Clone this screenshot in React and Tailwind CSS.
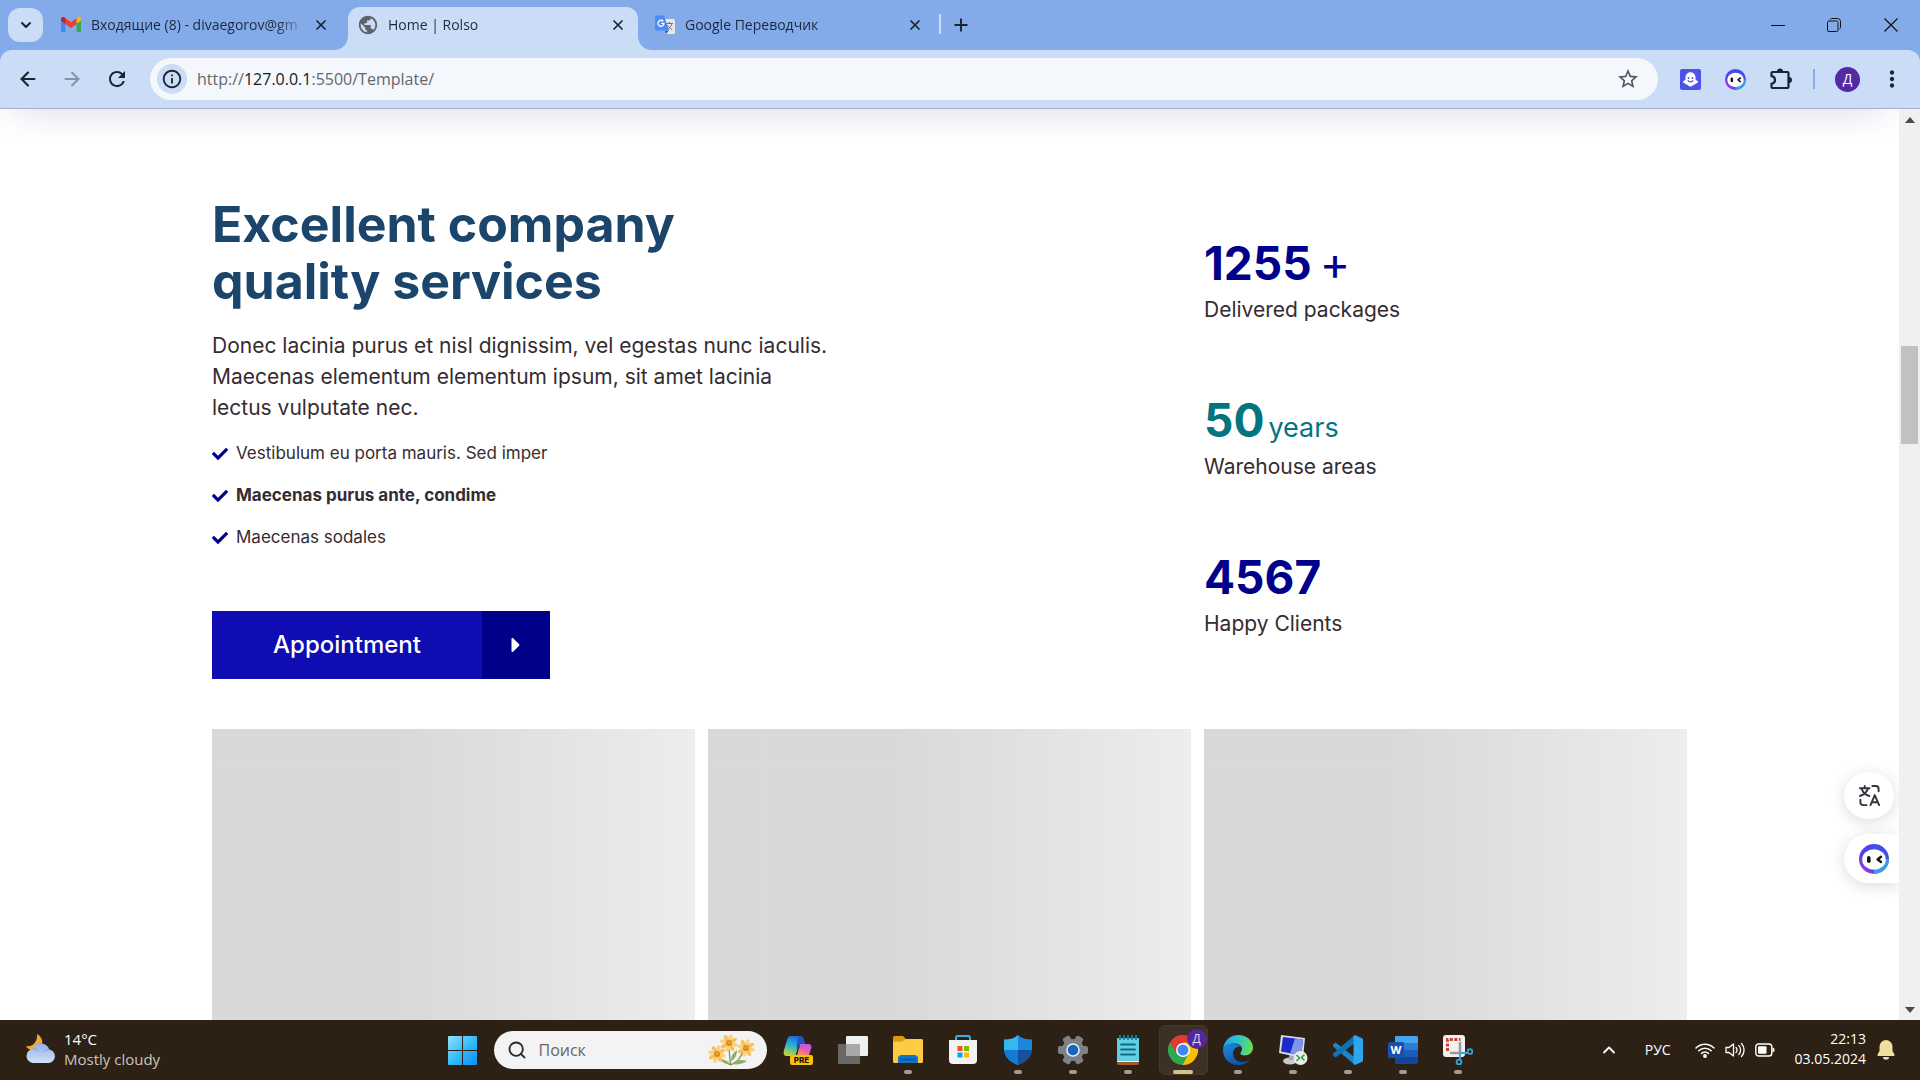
import React from "react";
import { ChevronDown, ChevronUp, X, Plus, ArrowLeft, ArrowRight, Search } from "lucide-react";
import { FaCaretRight, FaCheck } from "react-icons/fa";
import { MdRefresh, MdStarOutline, MdInfoOutline, MdMoreVert, MdPublic } from "react-icons/md";

/* ---------- small drawings ---------- */

const Gmail = () => (
  <svg viewBox="0 0 20 15" className="h-[15px] w-5">
    <path d="M0 2v11.600a1.400 1.400 0 0 0 1.400 1.400H4.500V6z" fill="#4285f4" />
    <path d="M15.500 6v9h3.100a1.400 1.400 0 0 0 1.400-1.400V2z" fill="#34a853" />
    <path d="M15.500 1v6L20 3.600V2c0-2-2-2.500-3.300-1.700z" fill="#fbbc04" />
    <path d="M4.500 7V1L10 5.200 15.500 1v6L10 11.200z" fill="#ea4335" />
    <path d="M0 2v1.600L4.500 7V1L3.300.3C2-.5 0 0 0 2z" fill="#c5221f" />
  </svg>
);

const Translate = () => (
  <svg viewBox="0 0 20 20" className="size-5">
    <path d="M8 4h10.500A1.500 1.500 0 0 1 20 5.500v12a1.500 1.500 0 0 1-1.500 1.500H11z" fill="#e8e8e6" />
    <path d="M11 8.500h7M14.500 7v1.500M17 8.500c-.7 3-2.500 4.700-5 6M12.500 10c.8 2 2.500 3.700 4.700 4.500" stroke="#6b7280" strokeWidth="1" fill="none" />
    <path d="M10 15.500h4L11 19z" fill="#3750b5" />
    <path d="M1.500.5H9l5 15H1.500A1.500 1.500 0 0 1 0 14V2A1.500 1.500 0 0 1 1.500.5z" fill="#4c8bf5" />
    <path d="M8.300 6.300A3 3 0 1 0 9 8.400H6.200" fill="none" stroke="#fff" strokeWidth="1.300" />
  </svg>
);

const Ghost = () => (
  <svg viewBox="0 0 21 21" className="size-[21px]">
    <rect width="21" height="21" rx="2" fill="#4f52e8" />
    <path d="M10.500 3.200a5 5 0 0 1 5 5v2.300c0 .8 2.500 1 2.500 2.500 0 1.300-2 1-2.600 2-.5 1-1.800.5-2.500 1.200-.8 1-1.500 1.300-2.400 1.300s-1.600-.3-2.400-1.300c-.7-.7-2-.2-2.500-1.200-.6-1-2.600-.7-2.600-2 0-1.500 2.500-1.700 2.500-2.500V8.200a5 5 0 0 1 5-5z" fill="#fff" />
    <circle cx="8.500" cy="9" r=".9" fill="#4f52e8" />
    <circle cx="12.500" cy="9" r=".9" fill="#4f52e8" />
    <path d="M7.800 11.300c1.200 2 4.200 2 5.400 0" stroke="#4f52e8" strokeWidth="1.300" fill="none" />
  </svg>
);

const Puzzle = () => (
  <svg viewBox="0 0 22 22" className="size-[22px]">
    <path d="M2.500 4h15a1 1 0 0 1 1 1v14a1 1 0 0 1-1 1h-15a1 1 0 0 1-1-1v-3.200c2.200-.3 3.500-1.800 3.500-3.800s-1.300-3.500-3.500-3.800V5a1 1 0 0 1 1-1z" fill="none" stroke="#1b2430" strokeWidth="2.200" strokeLinejoin="round" />
    <path d="M7 3.500a3 3 0 0 1 6 0zM19 9a3 3 0 0 1 0 6z" fill="#1b2430" />
  </svg>
);

const Bot = ({ id, className }) => (
  <svg viewBox="0 0 30 30" className={className}>
    <defs>
      <linearGradient id={id} x1="0" y1="1" x2=".8" y2=".2">
        <stop offset="0" stopColor="#c03ae0" />
        <stop offset=".45" stopColor="#5a3be6" />
        <stop offset="1" stopColor="#3f4fe8" />
      </linearGradient>
    </defs>
    <circle cx="15" cy="15" r="15" fill={`url(#${id})`} />
    <path d="M15 30a15 15 0 0 0 15-15l-4 0-11 11z" fill="#35b4e4" opacity=".8" />
    <ellipse cx="15" cy="15.500" rx="11.800" ry="10.300" fill="#fff" />
    <rect x="8" y="12" width="3.600" height="7" rx="1.800" fill="#15151c" />
    <path d="M22 12.800l-3.400 2.700 3.400 2.500" stroke="#15151c" strokeWidth="2.400" fill="none" strokeLinecap="round" strokeLinejoin="round" />
  </svg>
);

const TranslateSwap = () => (
  <svg viewBox="0 0 24 24" className="size-[23px]" fill="none" stroke="#34343f" strokeWidth="2" strokeLinecap="round" strokeLinejoin="round">
    <path d="M2 4.500h10M7 2v2.500M10.500 4.500C9.500 8.500 6.500 11 2 12.500M3.800 5c1.200 3.800 4.200 6.500 8 7.500" />
    <path d="M15 2h3.500a3 3 0 0 1 3 3v2.500M2.500 16.500V19a3 3 0 0 0 3 3H9" />
    <path d="M13 22l4.500-10.500L22 22M14.500 19h6" />
  </svg>
);

const Weather = () => (
  <svg viewBox="0 0 31 30" className="h-[30px] w-[31px]">
    <defs>
      <linearGradient id="cloud" x1="0" y1="0" x2="0" y2="1">
        <stop offset="0" stopColor="#8fb0ea" />
        <stop offset="1" stopColor="#d3e0f8" />
      </linearGradient>
    </defs>
    <path d="M12 0c6 3 7 11 2.500 14.500C10 18 2.500 16 1 12c5 1.500 12-3 11-12z" fill="#f3a72e" />
    <path d="M8 29a7.200 7.200 0 0 1-.3-14.300A9 9 0 0 1 24.300 15.500 6.800 6.800 0 0 1 23.500 29z" fill="url(#cloud)" />
    <path d="M7.700 15c3-.5 5 .8 6 2.500M24.300 15.500c-2.300-.2-4 .8-5 2.200" stroke="#7f9fe0" fill="none" />
  </svg>
);

const Start = () => (
  <svg viewBox="0 0 29 29" className="size-[29px]">
    <defs>
      <linearGradient id="start" x1="0" y1="0" x2="1" y2="1">
        <stop offset="0" stopColor="#8fe3ff" />
        <stop offset=".5" stopColor="#35bdf8" />
        <stop offset="1" stopColor="#0a8cf5" />
      </linearGradient>
    </defs>
    <path d="M1 0h13v14H0V1a1 1 0 0 1 1-1zM15 0h13a1 1 0 0 1 1 1v13H15zM0 15h14v14H1a1 1 0 0 1-1-1zM15 15h14v13a1 1 0 0 1-1 1H15z" fill="url(#start)" />
  </svg>
);

const petals = [0, 45, 90, 135, 180, 225, 270, 315];
const Bloom = ({ x, y, s }) => (
  <g transform={`translate(${x} ${y}) scale(${s})`}>
    {petals.map((a) => (
      <ellipse key={a} cx="0" cy="-6" rx="2.200" ry="4" fill={a % 90 ? "#f7c25a" : "#fbd27c"} transform={`rotate(${a + 15})`} />
    ))}
    <circle r="3.300" fill="#d9861c" />
    <circle r="1.800" cy="-.5" fill="#efa02e" />
  </g>
);
const Flowers = () => (
  <svg viewBox="0 0 50 32" className="h-8 w-[50px] shrink-0">
    <path d="M24 31C22 24 23 20 22 15M24 31c5-3 10-6 12-14M24 31c-5-2-9-4-13-9" stroke="#7d9a54" strokeWidth="1.300" fill="none" />
    <path d="M24 27c0-6 3-9 6-11 0 5-2 9-6 11zM25 30c3-4 9-5 15-3-4 3-10 4-15 3zM23 30c-2-3-6-5-10-5 2 4 6 5 10 5z" fill="#8fae6a" />
    <Bloom x={22} y={9} s={0.9} />
    <Bloom x={10} y={20} s={0.9} />
    <Bloom x={39} y={14} s={0.9} />
  </svg>
);

const Copilot = () => (
  <svg viewBox="0 0 30 30" className="size-[30px]">
    <defs>
      <linearGradient id="cpa" x1=".6" y1="0" x2=".3" y2="1">
        <stop offset="0" stopColor="#1d63dc" />
        <stop offset=".45" stopColor="#22b0d8" />
        <stop offset="1" stopColor="#c6d431" />
      </linearGradient>
      <linearGradient id="cpb" x1=".8" y1="0" x2=".3" y2="1">
        <stop offset="0" stopColor="#a95df0" />
        <stop offset=".5" stopColor="#e55ab4" />
        <stop offset="1" stopColor="#f79052" />
      </linearGradient>
    </defs>
    <path d="M8 1h9c2 0 3 1 3.500 3L22 9h-4c-2 0-2.500 1-3 3l-2 7c-.6 2-1 2-3 2H4c-3 0-4-2-3-6L4 5c1-3 2-4 4-4z" fill="url(#cpa)" />
    <path d="M17 1c2 0 3 1 3.500 3L22 9h-4c-2 0-2.500 1-3 3l-1 3c-1-4 0-11 3-14z" fill="#1b55c8" />
    <path d="M18 9h7c3 0 4 2 3 5l-2 6H14l2.500-8.500C17 9.500 17 9 18 9z" fill="url(#cpb)" />
    <rect x="7" y="20" width="23" height="10" rx="2" fill="#fbbf10" />
    <text x="18.500" y="28" textAnchor="middle" fontFamily="Inter, sans-serif" fontSize="8" fontWeight="800" fill="#1c1407">PRE</text>
  </svg>
);

const TaskView = () => (
  <svg viewBox="0 0 30 30" className="size-[30px]">
    <rect x="8" y="1" width="22" height="20" rx="1" fill="#efefef" />
    <rect x="0" y="9" width="22" height="20" rx="1" fill="#6a6866" />
    <path d="M8 9h14v12H8z" fill="#a9a8a7" />
  </svg>
);

const Folder = () => (
  <svg viewBox="0 0 30 30" className="size-[30px]">
    <path d="M1.500 1H10l3 3h7v8H0V2.500A1.500 1.500 0 0 1 1.500 1z" fill="#d99a0e" />
    <path d="M0 6.500h9l4-2.500h15.500A1.500 1.500 0 0 1 30 5.500v21a1.500 1.500 0 0 1-1.500 1.500h-27A1.500 1.500 0 0 1 0 26.500z" fill="#fdcc42" />
    <path d="M5 28v-4.500A3.500 3.500 0 0 1 8.500 20h13a3.500 3.500 0 0 1 3.500 3.500V28z" fill="#1274c9" />
    <path d="M8 24.500h14" stroke="#0c4f96" strokeWidth="1.500" />
  </svg>
);

const Store = () => (
  <svg viewBox="0 0 30 30" className="size-[30px]">
    <path d="M8 6V3a2 2 0 0 1 2-2h10a2 2 0 0 1 2 2v3" stroke="#35b3e8" strokeWidth="2" fill="none" />
    <path d="M1 5h28v20a4 4 0 0 1-4 4H5a4 4 0 0 1-4-4z" fill="#f3f3f3" />
    <path d="M9.500 11h5v5h-5z" fill="#f25022" /><path d="M16 11h5v5h-5z" fill="#7fba00" />
    <path d="M9.500 17.500h5v5h-5z" fill="#00a4ef" /><path d="M16 17.500h5v5h-5z" fill="#ffb900" />
  </svg>
);

const Shield = () => (
  <svg viewBox="0 0 30 30" className="size-[30px]">
    <path d="M15 0c3 3 8 4.500 14 4.500V13c0 9-6 14-14 17z" fill="#1a86dc" />
    <path d="M15 0C12 3 7 4.500 1 4.500V13c0 9 6 14 14 17z" fill="#35b8ee" />
    <path d="M15 15h13.800C28 22.500 22.500 27 15 30z" fill="#15509f" />
    <path d="M15 15H1.200C2 22.500 7.500 27 15 30z" fill="#147bd3" />
  </svg>
);

const Gear = () => (
  <svg viewBox="0 0 30 30" className="size-[30px]">
    <g fill="#7b8187">
      {[0, 60, 120].map((a) => (
        <rect key={a} x="11" y="0" width="8" height="30" rx="2" transform={`rotate(${a + 30} 15 15)`} />
      ))}
      <circle cx="15" cy="15" r="11" />
    </g>
    <circle cx="15" cy="15" r="6.800" fill="#e8f1fa" />
    <circle cx="15" cy="15" r="5.300" fill="#1667b7" />
  </svg>
);

const Notepad = () => (
  <svg viewBox="0 0 30 30" className="size-[30px]">
    <path d="M4 25h22v3a2 2 0 0 1-2 2H6a2 2 0 0 1-2-2z" fill="#a4592b" />
    <path d="M4 3h22v24H4z" fill="#f1f1ee" />
    <path d="M4 3h22v23H4z" fill="#62cfe3" />
    <path d="M7 1v3M11 1v3M15 1v3M19 1v3M23 1v3" stroke="#137d97" strokeWidth="2.200" strokeLinecap="round" />
    <path d="M8 9.500h14M8 14.500h14M8 19.500h14" stroke="#116a83" strokeWidth="1.800" strokeLinecap="round" />
  </svg>
);

const Chrome = () => (
  <svg viewBox="0 0 30 30" className="size-[30px]">
    <path d="M15 15 2 7.500A15 15 0 0 1 28 7.500z" fill="#e33b2e" />
    <path d="M15 15 2 7.500A15 15 0 0 0 15 30l6.500-11z" fill="#2da94f" />
    <path d="M15 15l6 3.500L14.500 30A15 15 0 0 0 28 7.500H15z" fill="#fdbd00" />
    <path d="M2 7.500h13v7.500l-6.500 3.500z" fill="#e33b2e" />
    <circle cx="15" cy="15" r="7" fill="#fff" />
    <circle cx="15" cy="15" r="5.500" fill="#4285f4" />
  </svg>
);

const Edge = () => (
  <svg viewBox="0 0 30 30" className="size-[30px]">
    <defs>
      <linearGradient id="edga" x1="0" y1=".3" x2="1" y2=".4">
        <stop offset="0" stopColor="#1fa3e6" />
        <stop offset=".5" stopColor="#2fc3d2" />
        <stop offset="1" stopColor="#67e04a" />
      </linearGradient>
      <linearGradient id="edgb" x1="0" y1="0" x2=".7" y2="1">
        <stop offset="0" stopColor="#1b8ee0" />
        <stop offset="1" stopColor="#0c4d9f" />
      </linearGradient>
    </defs>
    <path d="M0 14C1 6 7 0 15 0c9 0 15 6 15 12.500 0 5-4 8-8.500 8-3 0-4.500-1-4-2.500.5-1.500 1.500-2 1.500-4C19 11 16 8.500 12 8.500 6 8.500 1 11 0 14z" fill="url(#edga)" />
    <path d="M0 14c1.500-4.500 6-6 10.500-5.500 3 .3 5.500 1.300 7 3-4-.5-7.500 3-7.500 7 0 5 4.500 8.500 9 8.500 3 0 6-1.300 8-2.500C24 28.500 20 30 15 30 6 30 0 23 0 15z" fill="url(#edgb)" />
  </svg>
);

const Remote = () => (
  <svg viewBox="0 0 30 30" className="size-[30px]">
    <ellipse cx="12" cy="26" rx="7" ry="3.500" fill="#c9cbd0" />
    <path d="M11 19h5v6h-5z" fill="#a6a9b0" />
    <path d="M3 0l24 3-2 20L1 18z" fill="#d9dbe2" />
    <path d="M5 2l20 2.500-1.800 16L3 16.500z" fill="#1a2cc8" />
    <path d="M17 3.500l8 1-1.800 16-11-2.200z" fill="#7f95ea" />
    <circle cx="22.500" cy="23" r="7" fill="#e9ece9" />
    <path d="M18.500 20l3 3-3 3M26.500 19.500l-3 3 3 3" stroke="#3c9a3c" strokeWidth="1.600" fill="none" />
  </svg>
);

const VSCode = () => (
  <svg viewBox="0 0 30 30" className="size-[30px]">
    <path d="M0 9.500l2.500-2L22 22.500V30L0 11.500z" fill="#1a84cc" />
    <path d="M0 20.500l2.500 2L22 8V0L0 18.500z" fill="#1272b6" />
    <path d="M22 0l7 3.200a1.500 1.500 0 0 1 1 1.300v21a1.500 1.500 0 0 1-1 1.300L22 30l-1.500-1V1z" fill="#2ea6ee" />
  </svg>
);

const Word = () => (
  <svg viewBox="0 0 30 30" className="size-[30px]">
    <path d="M8 1h20.500A1.500 1.500 0 0 1 30 2.500V8H7V2a1 1 0 0 1 1-1z" fill="#45a5ee" />
    <path d="M7 8h23v7H7z" fill="#2c7cd6" /><path d="M7 15h23v7H7z" fill="#1b5cbd" />
    <path d="M7 22h23v5.500a1.500 1.500 0 0 1-1.500 1.500H8a1 1 0 0 1-1-1z" fill="#134599" />
    <rect x="0" y="7" width="16" height="16" rx="1.500" fill="#1850ad" />
    <text x="8" y="19" textAnchor="middle" fontFamily="Inter, sans-serif" fontSize="11" fontWeight="700" fill="#fff">W</text>
  </svg>
);

const Snip = () => (
  <svg viewBox="0 0 30 30" className="size-[30px]">
    <rect x="0" y="0" width="22" height="22" rx="3" fill="#f3f1f0" />
    <path d="M4.500 16V4.500H17.500" stroke="#c9452a" strokeWidth="3" strokeDasharray="3 1.600" fill="none" />
    <path d="M17 7v12M7 18h12" stroke="#9a9a9a" strokeWidth="2.600" />
    <path d="M17 18h8M17 18v7" stroke="#35a6dc" strokeWidth="2" />
    <circle cx="27" cy="16.500" r="2.400" fill="none" stroke="#35a6dc" strokeWidth="1.800" />
    <circle cx="16" cy="27" r="2.400" fill="none" stroke="#35a6dc" strokeWidth="1.800" />
  </svg>
);

const TabFoot = ({ className, d }) => (
  <svg viewBox="0 0 14 14" className={className}><path d={d} fill="#cbdcf6" /></svg>
);

/* ---------- browser frame ---------- */

function Tab({ icon, title, active }) {
  return (
    <div className={`relative flex h-[43px] w-[290px] items-center px-2.5 pb-2 ${active ? "rounded-t-xl bg-[#cbdcf6]" : ""}`}>
      {active && (
        <>
          <TabFoot className="absolute bottom-0 -left-3.5 size-3.5" d="M14 0v14H0C8 14 14 8 14 0z" />
          <TabFoot className="absolute -right-3.5 bottom-0 size-3.5" d="M0 0v14h14C6 14 0 8 0 0z" />
        </>
      )}
      <span className="mr-2.5 flex w-5 shrink-0 justify-center">{icon}</span>
      <button className="min-w-0 flex-1 overflow-hidden text-left text-[14px] leading-5 whitespace-nowrap text-[#1c2a3c] [mask-image:linear-gradient(to_right,black_84%,transparent_98%)]">
        {title}
      </button>
      <button aria-label={`Close ${title}`} className="flex w-5 shrink-0 justify-center">
        <X className="size-4" strokeWidth={2.6} color="#1b2430" />
      </button>
    </div>
  );
}

function TabStrip() {
  return (
    <div className="flex h-[50px] shrink-0 items-end bg-[#84abe9] pl-2">
      <button aria-label="Search tabs" className="mr-2 mb-2 flex h-[34px] w-[35px] items-center justify-center rounded-xl bg-[#cbdcf6]">
        <ChevronDown className="size-4" strokeWidth={3} color="#1b2430" />
      </button>
      <div className="flex gap-[7px]">
        <Tab icon={<Gmail />} title="Входящие (8) - divaegorov@gm" />
        <Tab active icon={<MdPublic className="size-[22px] shrink-0 text-[#5f6368]" />} title="Home | Rolso" />
        <Tab icon={<Translate />} title="Google Переводчик" />
      </div>
      <span className="mb-4 ml-1 h-5 w-[2px] bg-[#cbdcf6]" />
      <button aria-label="New tab" className="mb-[15px] ml-2.5">
        <Plus className="size-5" strokeWidth={2.3} color="#1b2430" />
      </button>
      <div className="ml-auto flex h-full items-center">
        <button aria-label="Minimize" className="flex w-14 justify-center">
          <svg viewBox="0 0 14 14" className="size-3.5"><path d="M0 7.500h14" stroke="#111" /></svg>
        </button>
        <button aria-label="Restore" className="flex w-14 justify-center">
          <svg viewBox="0 0 14 14" className="size-3.5" fill="none" stroke="#111">
            <rect x=".5" y="3" width="10.500" height="10.500" rx="1.500" />
            <path d="M3 1.500C3.300.8 4 .5 4.500.5h6a3 3 0 0 1 3 3v6c0 .7-.5 1.200-1 1.500" />
          </svg>
        </button>
        <button aria-label="Close window" className="flex w-[58px] justify-center">
          <svg viewBox="0 0 14 14" className="size-3.5"><path d="M.5.500l13 13M13.500.500l-13 13" stroke="#111" strokeWidth="1.200" /></svg>
        </button>
      </div>
    </div>
  );
}

function Toolbar() {
  return (
    <div className="shrink-0 bg-[#84abe9]">
      <div className="flex h-[59px] items-center rounded-t-xl border-b border-[#a3b1cb] bg-[#cbdcf6] pl-4">
        <button aria-label="Back" className="mr-5 flex w-6 justify-center"><ArrowLeft className="size-[22px]" strokeWidth={2.4} color="#1b2430" /></button>
        <button aria-label="Forward" className="mr-5 flex w-6 justify-center"><ArrowRight className="size-[22px]" strokeWidth={2.2} color="#8592a9" /></button>
        <button aria-label="Reload" className="mr-5 flex w-[26px] justify-center"><MdRefresh className="size-6 text-[#1b2430]" /></button>
        <div className="flex h-[42px] flex-1 items-center rounded-full bg-[#f4f8fd] pr-[18px] pl-[7px]">
          <button aria-label="Site information" className="flex size-[30px] items-center justify-center rounded-full bg-[#cbdcf6]">
            <MdInfoOutline className="size-[22px] text-[#1b2430]" />
          </button>
          <a href="http://127.0.0.1:5500/Template/" className="ml-2.5 flex-1 text-base text-[#63676d]">
            http://<span className="text-[#17191c]">127.0.0.1</span>:5500/Template/
          </a>
          <button aria-label="Bookmark"><MdStarOutline className="size-6 text-[#50555c]" /></button>
        </div>
        <div className="flex items-center pl-2.5">
          <button aria-label="Ghost extension" className="flex w-[45px] justify-center"><Ghost /></button>
          <button aria-label="Assistant extension" className="flex w-[45px] justify-center"><Bot id="botbar" className="size-[21px]" /></button>
          <button aria-label="Extensions" className="flex w-[45px] justify-center"><Puzzle /></button>
          <span className="mx-2.5 h-5 w-[2px] bg-[#84abe9]" />
          <button aria-label="Profile" className="ml-2.5 flex size-[25px] items-center justify-center rounded-full bg-[#5529a6] text-sm text-white">Д</button>
          <button aria-label="Menu" className="flex w-[60px] justify-center pl-1"><MdMoreVert className="size-[26px] text-[#1b2430]" /></button>
        </div>
      </div>
    </div>
  );
}

/* ---------- web page ---------- */

const points = [
  { text: "Vestibulum eu porta mauris. Sed imper", style: "text-[17px]" },
  { text: "Maecenas purus ante, condime", style: "text-[17px] font-bold" },
  { text: "Maecenas sodales", style: "text-[17px]" },
];

const stats = [
  { value: "1255", unit: "+", unitStyle: "ml-2 text-[46px] font-normal", label: "Delivered packages", color: "text-[#00008b]" },
  { value: "50", unit: "years", unitStyle: "ml-1 text-[27px] font-normal", label: "Warehouse areas", color: "text-[#027580]" },
  { value: "4567", unit: "", unitStyle: "", label: "Happy Clients", color: "text-[#00008b]" },
];

function Page() {
  return (
    <main className="relative flex-1 overflow-hidden bg-white font-[Inter,sans-serif] text-[#352c31]">
      <div className="mx-4 -mt-20 h-20 shadow-[0_0_36px_rgba(40,40,140,0.2)]" />
      <div className="mx-auto max-w-[1475px] pt-[87px]">
        <div className="grid grid-cols-3 gap-x-[13px]">
          <section className="col-span-2">
            <h2 className="text-[50px] leading-[57px] font-bold text-[#1b456b]">Excellent company<br />quality services</h2>
            <p className="mt-5 text-[21px] leading-[31px]">
              Donec lacinia purus et nisl dignissim, vel egestas nunc iaculis.<br />
              Maecenas elementum elementum ipsum, sit amet lacinia<br />
              lectus vulputate nec.
            </p>
            <ul className="mt-2.5">
              {points.map((p) => (
                <li key={p.text} className="flex h-[42px] items-center gap-2">
                  <FaCheck className="size-4 text-[#00008b]" />
                  <span className={p.style}>{p.text}</span>
                </li>
              ))}
            </ul>
            <button className="mt-[52px] flex h-[68px] w-[338px] items-center bg-[#0f0db1] text-2xl font-medium text-white">
              <span className="flex-1">Appointment</span>
              <span className="flex h-full w-[68px] items-center justify-center bg-[#00008b]"><FaCaretRight className="size-6" /></span>
            </button>
          </section>
          <section className="flex flex-col gap-16 pt-9">
            {stats.map((s) => (
              <div key={s.label}>
                <p className={`flex h-[62px] items-baseline text-[46px] leading-[62px] font-bold ${s.color}`}>
                  {s.value}
                  <span className={`leading-none ${s.unitStyle}`}>{s.unit}</span>
                </p>
                <p className="text-[21px] leading-[31px]">{s.label}</p>
              </div>
            ))}
          </section>
        </div>
        <div className="mt-[50px] grid grid-cols-3 gap-[13px]">
          {["a", "b", "c"].map((k) => (
            <div key={k} className="h-[420px] bg-linear-to-r from-[#d9d9d9] from-40% to-[#ededed]" />
          ))}
        </div>
      </div>
      <div className="absolute right-0 bottom-[137px] flex flex-col items-end gap-[15px]">
        <button aria-label="Translate page" className="mr-[5px] flex h-[47px] w-[50px] items-center justify-center rounded-full bg-white shadow-[0_3px_16px_rgba(0,0,0,0.14)]"><TranslateSwap /></button>
        <button aria-label="Assistant" className="flex h-[49px] w-[55px] items-center justify-center rounded-l-full bg-white pl-1 shadow-[0_3px_16px_rgba(0,0,0,0.14)]"><Bot id="botpage" className="size-[30px]" /></button>
      </div>
    </main>
  );
}

function ScrollBar() {
  return (
    <div className="flex w-[21px] shrink-0 flex-col bg-[#f0f0f0]">
      <div className="flex h-[21px] items-center justify-center"><svg viewBox="0 0 10 6" className="h-1.5 w-2.5"><path d="M5 0l5 6H0z" fill="#4a4a4a" /></svg></div>
      <div className="flex-[216]" />
      <div className="mx-[2px] flex-[98] bg-[#c1c1c1]" />
      <div className="flex-[555]" />
      <div className="flex h-[21px] items-center justify-center"><svg viewBox="0 0 10 6" className="h-1.5 w-2.5"><path d="M5 6l5-6H0z" fill="#4a4a4a" /></svg></div>
    </div>
  );
}

/* ---------- desktop taskbar ---------- */

const apps = [
  { name: "Copilot", icon: <Copilot /> },
  { name: "Task view", icon: <TaskView /> },
  { name: "Explorer", icon: <Folder />, open: true },
  { name: "Store", icon: <Store /> },
  { name: "Security", icon: <Shield />, open: true },
  { name: "Settings", icon: <Gear />, open: true },
  { name: "Notepad", icon: <Notepad />, open: true },
  { name: "Chrome", icon: <Chrome />, open: true, active: true },
  { name: "Edge", icon: <Edge />, open: true },
  { name: "Remote desktop", icon: <Remote />, open: true },
  { name: "VS Code", icon: <VSCode />, open: true },
  { name: "Word", icon: <Word />, open: true },
  { name: "Snipping tool", icon: <Snip />, open: true },
];

function TaskbarApp({ app }) {
  return (
    <button aria-label={app.name} className="relative flex h-[60px] w-[55px] items-center justify-center">
      {app.active && <span className="absolute inset-x-[3px] inset-y-[5px] rounded-md border border-[#463a2e] bg-[#3d3126]" />}
      <span className="relative">{app.icon}</span>
      {app.active && (
        <span className="absolute top-[9px] right-1 flex size-5 items-center justify-center rounded-full bg-[#5029a0] text-xs text-[#e3d8f5]">Д</span>
      )}
      {app.open && <span className={`absolute bottom-1.5 h-1 rounded-full ${app.active ? "w-5 bg-[#d4c08b]" : "w-2 bg-[#a29b94]"}`} />}
    </button>
  );
}

function Taskbar() {
  return (
    <footer className="grid h-[60px] shrink-0 grid-cols-[1fr_auto_1fr] items-center bg-[#2d2115] text-white">
      <button className="flex items-center gap-2 pb-0.5 pl-[25px] text-left text-[15px] leading-5">
        <Weather />
        <span>14°C<br /><span className="text-[#c9c4be]">Mostly cloudy</span></span>
      </button>
      <div className="flex items-center">
        <button aria-label="Start" className="flex w-[55px] justify-center"><Start /></button>
        <label className="mx-1 flex h-[38px] w-[273px] items-center rounded-full bg-[#f3f3f3] pr-2.5 pl-[13px]">
          <Search className="size-5 shrink-0" strokeWidth={2.2} color="#2b2b2f" />
          <input type="text" placeholder="Поиск" aria-label="Поиск" className="ml-3 w-0 flex-1 bg-transparent text-base text-[#333] outline-none placeholder:text-[#666]" />
          <Flowers />
        </label>
        {apps.map((a) => <TaskbarApp key={a.name} app={a} />)}
      </div>
      <div className="flex items-center justify-end pr-[25px]">
        <button aria-label="Hidden icons" className="mr-[26px]"><ChevronUp className="size-5" strokeWidth={2.2} /></button>
        <button className="mr-6 text-sm">РУС</button>
        <button aria-label="Network, sound and battery" className="mr-5 flex items-center gap-2.5">
          <svg viewBox="0 0 20 16" className="h-4 w-5" fill="none" stroke="#fff" strokeWidth="1.500" strokeLinecap="round">
            <path d="M1 6a12.500 12.500 0 0 1 18 0M3.800 8.800a8.600 8.600 0 0 1 12.400 0M6.600 11.400a4.800 4.800 0 0 1 6.800 0" />
            <circle cx="10" cy="14" r="1.200" fill="#fff" />
          </svg>
          <svg viewBox="0 0 20 16" className="h-4 w-5" fill="none" stroke="#fff" strokeWidth="1.300" strokeLinecap="round" strokeLinejoin="round">
            <path d="M1 5.500h3L8.500 2v12L4 10.500H1zM11 5.500a3.500 3.500 0 0 1 0 5M13.800 3.500a6.500 6.500 0 0 1 0 9M16.500 1.500a9.500 9.500 0 0 1 0 13" />
          </svg>
          <svg viewBox="0 0 20 14" className="h-3.5 w-5">
            <rect x=".8" y="1" width="16" height="12" rx="2.800" fill="none" stroke="#fff" strokeWidth="1.400" />
            <rect x="3" y="3.200" width="8.500" height="7.600" rx="1" fill="#fff" />
            <path d="M17.500 4.800c1.500 0 2 .6 2 2.200s-.5 2.200-2 2.200z" fill="#fff" />
          </svg>
        </button>
        <button className="pb-0.5 text-right text-sm leading-5">22:13<br />03.05.2024</button>
        <button aria-label="Notifications" className="ml-[11px]">
          <svg viewBox="0 0 18 20" className="h-5 w-[18px]" fill="#eedf9f">
            <path d="M9 0a6.500 6.500 0 0 1 6.500 6.500V11l2 3.500c.3.700 0 1.500-.9 1.500H1.400c-.9 0-1.200-.8-.9-1.500L2.500 11V6.500A6.500 6.500 0 0 1 9 0z" />
            <path d="M6 17h6a3 2.800 0 0 1-6 0z" />
          </svg>
        </button>
      </div>
    </footer>
  );
}

export default function App() {
  return (
    <div className="flex h-screen flex-col overflow-hidden font-['Open_Sans','Noto_Sans',sans-serif]">
      <TabStrip />
      <Toolbar />
      <div className="flex min-h-0 flex-1">
        <Page />
        <ScrollBar />
      </div>
      <Taskbar />
    </div>
  );
}
